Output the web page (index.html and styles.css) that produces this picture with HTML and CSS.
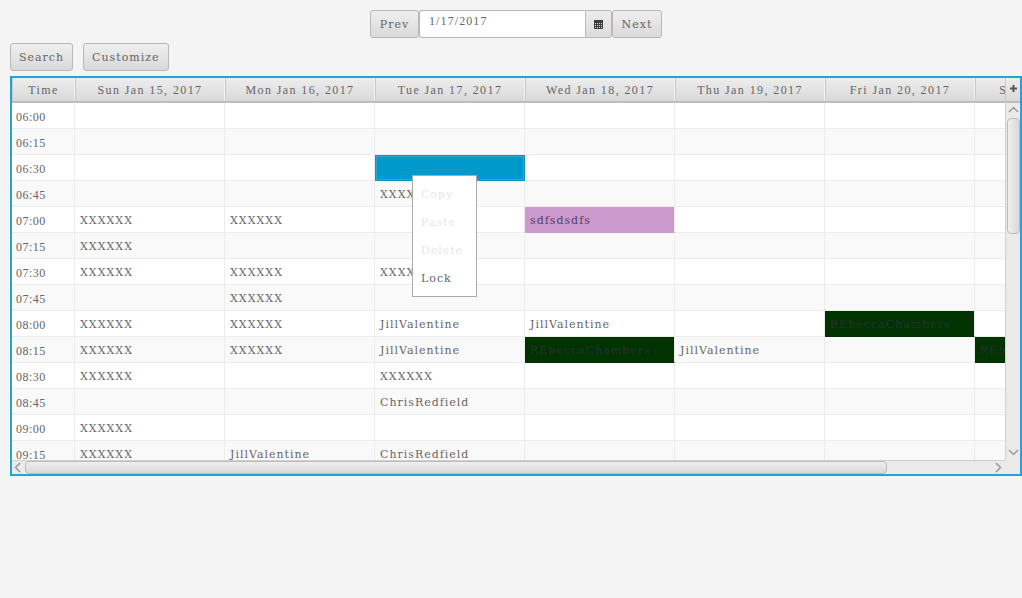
FILE: index.html
```html
<!DOCTYPE html>
<html lang="en">
<head>
    <meta charset="UTF-8">
    <title>Schedule</title>
    <link rel="stylesheet" href="styles.css">
</head>
<body>
<div id="date-bar">
    <button class="btn">Prev</button>
    <div id="date-picker">
        <span id="date-field">1/17/2017</span>
        <span id="date-btn">
            <svg width="9" height="9" viewBox="0 0 9 9"><path fill="#3c3c3c" d="M0 0h9v9H0z"/><path fill="#ddd" d="M1 3h1v1H1zM3 3h1v1H3zM5 3h1v1H5zM7 3h1v1H7zM1 5h1v1H1zM3 5h1v1H3zM5 5h1v1H5zM7 5h1v1H7zM1 7h1v1H1zM3 7h1v1H3zM5 7h1v1H5zM7 7h1v1H7z"/></svg>
        </span>
    </div>
    <button class="btn">Next</button>
</div>
<div id="tool-bar">
    <button class="btn">Search</button>
    <button class="btn">Customize</button>
</div>
<div id="table">
    <div id="view">
        <div class="head">
            <div class="th time">Time</div>
            <div class="th">Sun Jan 15, 2017</div>
            <div class="th">Mon Jan 16, 2017</div>
            <div class="th">Tue Jan 17, 2017</div>
            <div class="th">Wed Jan 18, 2017</div>
            <div class="th">Thu Jan 19, 2017</div>
            <div class="th">Fri Jan 20, 2017</div>
            <div class="th">Sat Jan 21, 2017</div>
        </div>
        <div class="row"><div class="td time">06:00</div><div class="td"></div><div class="td"></div><div class="td"></div><div class="td"></div><div class="td"></div><div class="td"></div><div class="td"></div></div>
        <div class="row"><div class="td time">06:15</div><div class="td"></div><div class="td"></div><div class="td"></div><div class="td"></div><div class="td"></div><div class="td"></div><div class="td"></div></div>
        <div class="row"><div class="td time">06:30</div><div class="td"></div><div class="td"></div><div class="td selected"></div><div class="td"></div><div class="td"></div><div class="td"></div><div class="td"></div></div>
        <div class="row"><div class="td time">06:45</div><div class="td"></div><div class="td"></div><div class="td">XXXXXX</div><div class="td"></div><div class="td"></div><div class="td"></div><div class="td"></div></div>
        <div class="row"><div class="td time">07:00</div><div class="td">XXXXXX</div><div class="td">XXXXXX</div><div class="td"></div><div class="td purple">sdfsdsdfs</div><div class="td"></div><div class="td"></div><div class="td"></div></div>
        <div class="row"><div class="td time">07:15</div><div class="td">XXXXXX</div><div class="td"></div><div class="td"></div><div class="td"></div><div class="td"></div><div class="td"></div><div class="td"></div></div>
        <div class="row"><div class="td time">07:30</div><div class="td">XXXXXX</div><div class="td">XXXXXX</div><div class="td">XXXXXX</div><div class="td"></div><div class="td"></div><div class="td"></div><div class="td"></div></div>
        <div class="row"><div class="td time">07:45</div><div class="td"></div><div class="td">XXXXXX</div><div class="td"></div><div class="td"></div><div class="td"></div><div class="td"></div><div class="td"></div></div>
        <div class="row"><div class="td time">08:00</div><div class="td">XXXXXX</div><div class="td">XXXXXX</div><div class="td">JillValentine</div><div class="td">JillValentine</div><div class="td"></div><div class="td green">REbeccaChambers</div><div class="td"></div></div>
        <div class="row"><div class="td time">08:15</div><div class="td">XXXXXX</div><div class="td">XXXXXX</div><div class="td">JillValentine</div><div class="td green">REbeccaChambers</div><div class="td">JillValentine</div><div class="td"></div><div class="td green">REbeccaChambers</div></div>
        <div class="row"><div class="td time">08:30</div><div class="td">XXXXXX</div><div class="td"></div><div class="td">XXXXXX</div><div class="td"></div><div class="td"></div><div class="td"></div><div class="td"></div></div>
        <div class="row"><div class="td time">08:45</div><div class="td"></div><div class="td"></div><div class="td">ChrisRedfield</div><div class="td"></div><div class="td"></div><div class="td"></div><div class="td"></div></div>
        <div class="row"><div class="td time">09:00</div><div class="td">XXXXXX</div><div class="td"></div><div class="td"></div><div class="td"></div><div class="td"></div><div class="td"></div><div class="td"></div></div>
        <div class="row"><div class="td time">09:15</div><div class="td">XXXXXX</div><div class="td">JillValentine</div><div class="td">ChrisRedfield</div><div class="td"></div><div class="td"></div><div class="td"></div><div class="td"></div></div>
    </div>
    <div id="corner">
        <svg width="7" height="7" viewBox="0 0 7 7"><path fill="#555" d="M2.500 0h2v2.500H7v2H4.500V7h-2V4.500H0v-2h2.500z"/></svg>
    </div>
    <div id="v-bar">
        <svg class="arrow" width="11" height="7" viewBox="0 0 11 7"><path fill="none" stroke="#999" stroke-width="1.5" d="M1 6l4.500-4.500L10 6"/></svg>
        <div id="v-thumb"></div>
        <svg class="arrow" width="11" height="7" viewBox="0 0 11 7"><path fill="none" stroke="#999" stroke-width="1.5" d="M1 1l4.500 4.500L10 1"/></svg>
    </div>
    <div id="h-bar">
        <svg class="arrow" width="7" height="11" viewBox="0 0 7 11"><path fill="none" stroke="#999" stroke-width="1.5" d="M6 1L1.500 5.500 6 10"/></svg>
        <div id="h-track"><div id="h-thumb"></div></div>
        <svg class="arrow" width="7" height="11" viewBox="0 0 7 11"><path fill="none" stroke="#999" stroke-width="1.5" d="M1 1l4.500 4.500L1 10"/></svg>
    </div>
</div>
<ul id="menu">
    <li class="off">Copy</li>
    <li class="off">Paste</li>
    <li class="off">Delete</li>
    <li>Lock</li>
</ul>
</body>
</html>
```

FILE: styles.css
```css
*{
    margin: 0;
    padding: 0;
    box-sizing: border-box;
}
body{
    background: #f4f4f4;
    font: 11px "DejaVu Serif", serif;
    letter-spacing: 1px;
    color: #666;
    height: 598px;
    overflow: hidden;
    position: relative;
}
#date-bar{
    display: flex;
    justify-content: center;
    padding: 10px 0 0 10px;
    height: 43px;
}
#date-bar .btn{
    width: 49px;
    padding-top: 1px;
}
#date-bar .btn:last-child{
    width: 50px;
}
#tool-bar{
    display: flex;
    gap: 10px;
    padding-left: 10px;
    height: 33px;
}
.btn{
    height: 28px;
    padding: 0 8px;
    border: 1px solid #b8b8b8;
    border-radius: 3px;
    background: linear-gradient(#efefef, #d9d9d9);
    font: inherit;
    letter-spacing: inherit;
    color: inherit;
}
#date-picker{
    display: flex;
    width: 193px;
    height: 28px;
}
#date-field{
    flex: 1;
    background: #fff;
    border: 1px solid #b8b8b8;
    border-right: 0;
    border-radius: 3px 0 0 3px;
    padding: 2px 0 0 9px;
    font: 12px/16px "Liberation Serif", serif;
    letter-spacing: 1.1px;
}
#date-btn{
    width: 27px;
    display: flex;
    align-items: center;
    justify-content: center;
    border: 1px solid #b8b8b8;
    border-radius: 0 3px 3px 0;
    background: linear-gradient(#ececec, #dcdcdc);
}
#table{
    margin-left: 10px;
    width: 1012px;
    height: 400px;
    border: 2px solid #1ea6d9;
    display: grid;
    grid-template-columns: 1fr 15px;
    grid-template-rows: 25px 357px 14px;
    background: #eaeaea;
    position: relative;
}
#view{
    grid-column: 1;
    grid-row: 1 / 3;
    overflow: hidden;
    background: #fff;
}
.head,.row{
    display: flex;
    width: 1150px;
}
.head{
    height: 25px;
    border-bottom: 2px solid #bdbdbd;
}
.th{
    flex: none;
    width: 150px;
    font: 12px/25px "Liberation Serif", serif;
    letter-spacing: 1.4px;
    text-align: center;
    background: linear-gradient(#ededed, #d9d9d9);
    border-right: 1px solid #f4f4f4;
    border-left: 1px solid #c9c9c9;
    white-space: nowrap;
    overflow: hidden;
}
.row{
    height: 26px;
}
.row:nth-child(odd){
    background: #f9f9f9;
}
.td{
    flex: none;
    width: 150px;
    padding-left: 5px;
    line-height: 28px;
    border-right: 1px solid #ececec;
    border-bottom: 1px solid #ececec;
    white-space: nowrap;
    overflow: hidden;
}
.th.time,.td.time{
    width: 63px;
}
.td.time{
    padding-left: 4px;
    font: 12px/28px "Liberation Serif", serif;
    letter-spacing: 0.5px;
}
.selected{
    background: #0099cc;
    border: 1px solid #0a94c4;
    box-shadow: inset 0 0 0 1px #2aa9d6;
}
.purple{
    background: #cc99cc;
    border-bottom-color: #cc99cc;
    color: #50406a;
}
.green{
    background: #003300;
    border-bottom-color: #003300;
    color: #26303a;
}
#corner{
    grid-column: 2;
    grid-row: 1;
    display: flex;
    align-items: center;
    justify-content: center;
    padding-bottom: 3px;
    background: linear-gradient(#ededed, #d9d9d9);
    border-bottom: 2px solid #bdbdbd;
    border-left: 1px solid #c9c9c9;
}
#v-bar{
    grid-column: 2;
    grid-row: 2;
    display: flex;
    flex-direction: column;
    align-items: center;
    justify-content: space-between;
    padding: 3px 0 4px;
    background: #eaeaea;
    border-left: 1px solid #d0d0d0;
}
#v-thumb{
    width: 13px;
    height: 116px;
    margin-top: 5px;
    margin-bottom: auto;
    border: 1px solid #bcbcbc;
    border-radius: 4px;
    background: linear-gradient(to right, #efefef, #d9d9d9);
}
#h-bar{
    grid-column: 1;
    grid-row: 3;
    display: flex;
    align-items: center;
    padding: 0 3px 0 2px;
    gap: 4px;
    background: #eaeaea;
    border-top: 1px solid #d0d0d0;
}
#h-track{
    flex: 1;
}
#h-thumb{
    width: 862px;
    height: 13px;
    border: 1px solid #bcbcbc;
    border-radius: 4px;
    background: linear-gradient(#efefef, #d9d9d9);
}
.arrow{
    flex: none;
}
#menu{
    position: absolute;
    left: 412px;
    top: 175px;
    width: 65px;
    height: 122px;
    padding-top: 5px;
    list-style: none;
    background: #fff;
    border: 1px solid #ababab;
}
#menu li{
    height: 28px;
    line-height: 28px;
    padding-left: 8px;
}
#menu .off{
    color: #e6e6e6;
}
```
